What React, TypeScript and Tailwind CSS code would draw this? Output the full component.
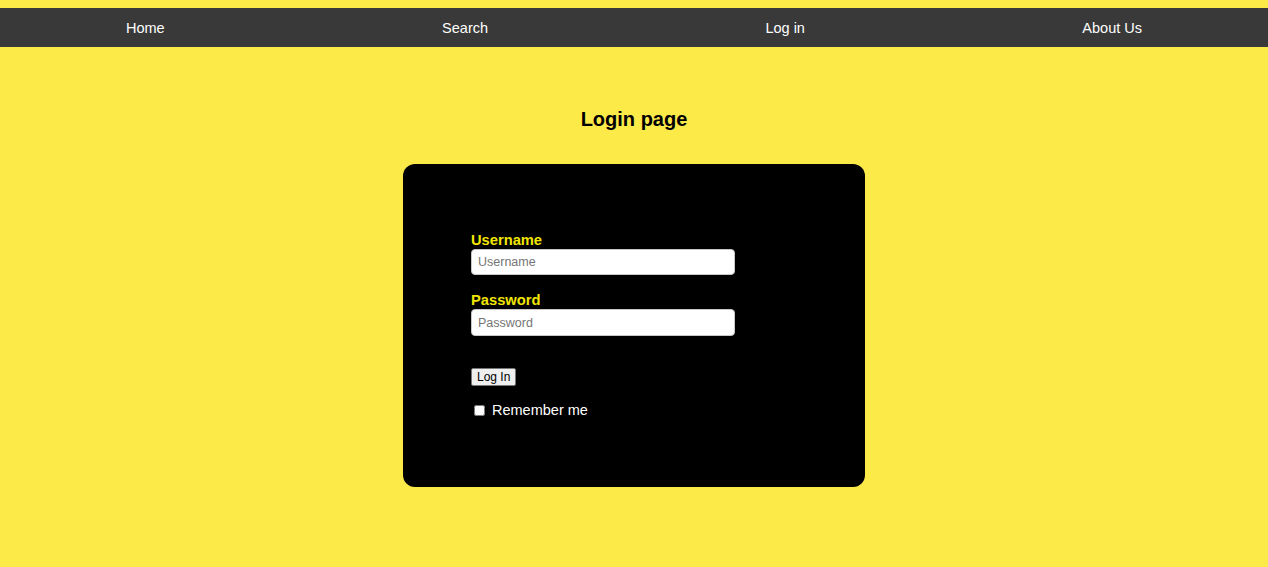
const navItems = ["Home", "Search", "Log in", "About Us"];

export default function App() {
  return (
    <div className="min-h-[567px] bg-[#fcea48] pt-[8px] font-['Liberation_Sans',Arial,sans-serif]">
      {/* Top nav */}
      <nav className="flex h-[39px] items-center justify-between bg-[#393939] px-[126px] pt-[1px]">
        {navItems.map((item) => (
          <a key={item} href="#" className="text-[14.5px] leading-none text-white">
            {item}
          </a>
        ))}
      </nav>

      <h1 className="mt-[61px] text-center text-[20px] font-bold leading-[23px] text-black">
        Login page
      </h1>

      {/* Login card */}
      <div className="mx-auto mt-[33px] h-[323px] w-[462px] rounded-[12px] bg-black pl-[68px] pt-[68px]">
        <form className="flex w-[264px] flex-col items-start">
          <label className="text-[14.7px] font-bold leading-[16px] text-[#f2e600]">Username</label>
          <input
            type="text"
            placeholder="Username"
            className="mt-[1px] h-[26px] w-full rounded-[4px] border border-[#c8c8c8] bg-white px-[6px] text-[12.5px] text-black placeholder:text-[#757575] focus:outline-none"
          />

          <label className="mt-[17px] text-[14.7px] font-bold leading-[16px] text-[#f2e600]">Password</label>
          <input
            type="password"
            placeholder="Password"
            className="mt-[1px] h-[27px] w-full rounded-[4px] border border-[#c8c8c8] bg-white px-[6px] text-[12.5px] text-black placeholder:text-[#757575] focus:outline-none"
          />

          <button
            type="button"
            className="mt-[32px] block h-[18px] rounded-[2px] border border-[#767676] bg-[#efefef] px-[5px] text-[12px] leading-none text-black"
          >
            Log In
          </button>

          <label className="mt-[16px] flex items-center text-[14.5px] leading-[17px] text-white">
            <input type="checkbox" className="ml-[3px] mr-[7px] h-[11px] w-[11px]" />
            Remember me
          </label>
        </form>
      </div>
    </div>
  );
}
